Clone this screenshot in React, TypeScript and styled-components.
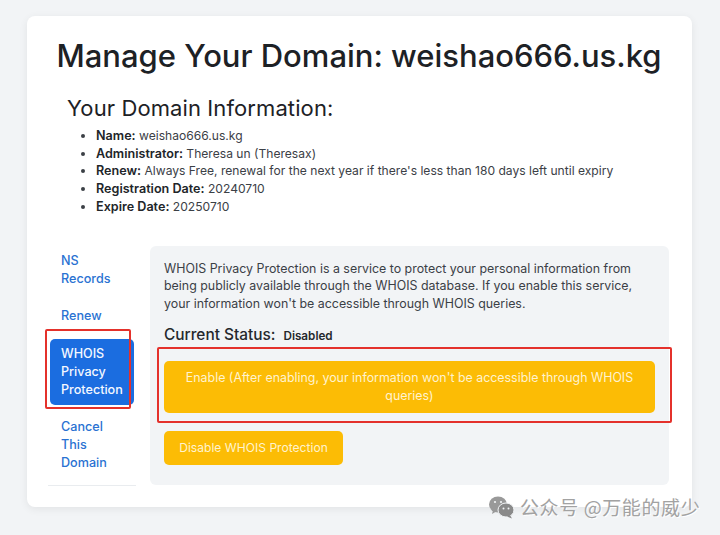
import React from "react";
import styled, { createGlobalStyle } from "styled-components";

const Global = createGlobalStyle`
  html, body { margin: 0; padding: 0; background: #f2f4f6; }
  body { font-family: Inter, "Open Sans", sans-serif; color: #212529; }
`;
const Page = styled.div`
  position: relative;
  width: 720px;
  height: 535px;
  overflow: hidden;
  padding: 16px 28px 0 27px;
  box-sizing: border-box;
`;
const Card = styled.main`
  background: #fff;
  border-radius: 8px;
  box-shadow: 0 2px 8px rgba(0, 0, 0, 0.07);
  height: 491px;
  padding: 20px 22px 0 21px;
  box-sizing: border-box;
`;
const Title = styled.h1`
  margin: 0;
  font-size: 31px;
  line-height: 40px;
  font-weight: 500;
  text-align: center;
  color: #1d2125;
  white-space: nowrap;
`;
const Info = styled.section`
  margin: 19px 0 0 19px;
`;
const SubTitle = styled.h2`
  margin: 0;
  font-size: 22px;
  line-height: 26px;
  font-weight: 400;
  letter-spacing: 0.1px;
  color: #1d2125;
`;
const InfoList = styled.ul`
  margin: 6px 0 0;
  padding: 0 0 0 29px;
  font-size: 12.1px;
  line-height: 17.7px;
  color: #3b4046;
  li b { font-weight: 600; font-size: 12.6px; color: #212529; }
`;
const Columns = styled.div`
  display: flex;
  margin-top: 30px;
`;
const Sidebar = styled.nav`
  width: 88px;
  margin-right: 14px;
  flex: none;
  display: flex;
  flex-direction: column;
  gap: 7.5px;
  padding: 0 2px 8px;
  box-sizing: border-box;
  height: 240px;
  border-bottom: 1px solid #e9ecef;
`;
const NavItem = styled.a<{ $active?: boolean }>`
  display: block;
  padding: 6px 11px;
  border-radius: 5px;
  font-size: 12.6px;
  line-height: 18px;
  font-weight: 500;
  color: ${(p) => (p.$active ? "#f4f8ff" : "#2a72d2")};
  background: ${(p) => (p.$active ? "#1b6de0" : "transparent")};
`;
const Panel = styled.section`
  width: 519px;
  height: 239px;
  flex: none;
  background: #f2f4f6;
  border-radius: 6px;
  padding: 14px 14px 0;
  box-sizing: border-box;
`;
const Description = styled.p`
  margin: 0;
  font-size: 12.4px;
  line-height: 17.8px;
  color: #3b4046;
`;
const Status = styled.div`
  display: flex;
  align-items: baseline;
  gap: 8px;
  margin-top: 11px;
  height: 22px;
`;
const StatusLabel = styled.span`
  font-size: 15.4px;
  line-height: 22px;
  font-weight: 500;
  color: #25282c;
`;
const StatusValue = styled.strong`
  font-size: 11.7px;
  font-weight: 600;
  color: #25282c;
`;
const ActionButton = styled.button<{ $wide?: boolean }>`
  display: block;
  border: 0;
  border-radius: 5px;
  background: #fcbc05;
  color: #fff3cf;
  font-family: inherit;
  font-size: ${(p) => (p.$wide ? "12.4px" : "12.1px")};
  line-height: 17.5px;
  font-weight: 400;
  text-align: center;
  padding: ${(p) => (p.$wide ? "8px 16px" : "8px 15px")};
  width: ${(p) => (p.$wide ? "491px" : "179px")};
  height: ${(p) => (p.$wide ? "52px" : "34px")};
  margin-top: ${(p) => (p.$wide ? "15px" : "18px")};
  white-space: ${(p) => (p.$wide ? "normal" : "nowrap")};
`;
const RedFrame = styled.div<{ $x: number; $y: number; $w: number; $h: number }>`
  position: absolute;
  left: ${(p) => p.$x}px;
  top: ${(p) => p.$y}px;
  width: ${(p) => p.$w}px;
  height: ${(p) => p.$h}px;
  box-sizing: border-box;
  border: 2px solid #e4312b;
  border-radius: 2px;
  pointer-events: none;
`;
const Watermark = styled.div`
  position: absolute;
  left: 488px;
  top: 495px;
  display: flex;
  align-items: center;
  gap: 5px;
  color: #a2a2a2;
  font-family: "Noto Sans CJK SC", sans-serif;
  font-size: 19px;
  line-height: 22px;
  letter-spacing: 0.6px;
  text-shadow: 1px 1px 0 #fff;
  white-space: nowrap;
`;

const WeChat = () => (
  <svg width="27" height="24" viewBox="0 0 27 24" aria-hidden="true">
    <ellipse cx="10" cy="9.5" rx="9" ry="8" fill="#999" />
    <path d="M5 15l-1 4 5-3z" fill="#999" />
    <ellipse cx="18" cy="15" rx="8" ry="7" fill="#8a8a8a" stroke="#f2f4f6" strokeWidth="1" />
    <path d="M22 20l2 3.5-5-2z" fill="#8a8a8a" />
    <circle cx="7" cy="7" r="1.1" fill="#f2f4f6" />
    <circle cx="13" cy="7" r="1.1" fill="#f2f4f6" />
    <circle cx="15.5" cy="13.5" r="1" fill="#f2f4f6" />
    <circle cx="20.5" cy="13.5" r="1" fill="#f2f4f6" />
  </svg>
);

export default function App() {
  return (
    <Page>
      <Global />
      <Card>
        <Title>Manage Your Domain: weishao666.us.kg</Title>
        <Info>
          <SubTitle>Your Domain Information:</SubTitle>
          <InfoList>
            <li><b>Name:</b> weishao666.us.kg</li>
            <li><b>Administrator:</b> Theresa un (Theresax)</li>
            <li><b>Renew:</b> Always Free, renewal for the next year if there's less than 180 days left until expiry</li>
            <li><b>Registration Date:</b> 20240710</li>
            <li><b>Expire Date:</b> 20250710</li>
          </InfoList>
        </Info>
        <Columns>
          <Sidebar>
            <NavItem>NS Records</NavItem>
            <NavItem>Renew</NavItem>
            <NavItem $active>WHOIS Privacy Protection</NavItem>
            <NavItem>Cancel This Domain</NavItem>
          </Sidebar>
          <Panel>
            <Description>
              WHOIS Privacy Protection is a service to protect your personal information from being publicly available through the WHOIS database. If you enable this service, your information won't be accessible through WHOIS queries.
            </Description>
            <Status>
              <StatusLabel>Current Status:</StatusLabel>
              <StatusValue>Disabled</StatusValue>
            </Status>
            <ActionButton $wide>Enable (After enabling, your information won't be accessible through WHOIS queries)</ActionButton>
            <ActionButton>Disable WHOIS Protection</ActionButton>
          </Panel>
        </Columns>
      </Card>
      <RedFrame $x={45} $y={329} $w={86} $h={80} />
      <RedFrame $x={157} $y={347} $w={515} $h={76} />
      <Watermark>
        <WeChat />
        <span>公众号 @万能的威少</span>
      </Watermark>
    </Page>
  );
}
